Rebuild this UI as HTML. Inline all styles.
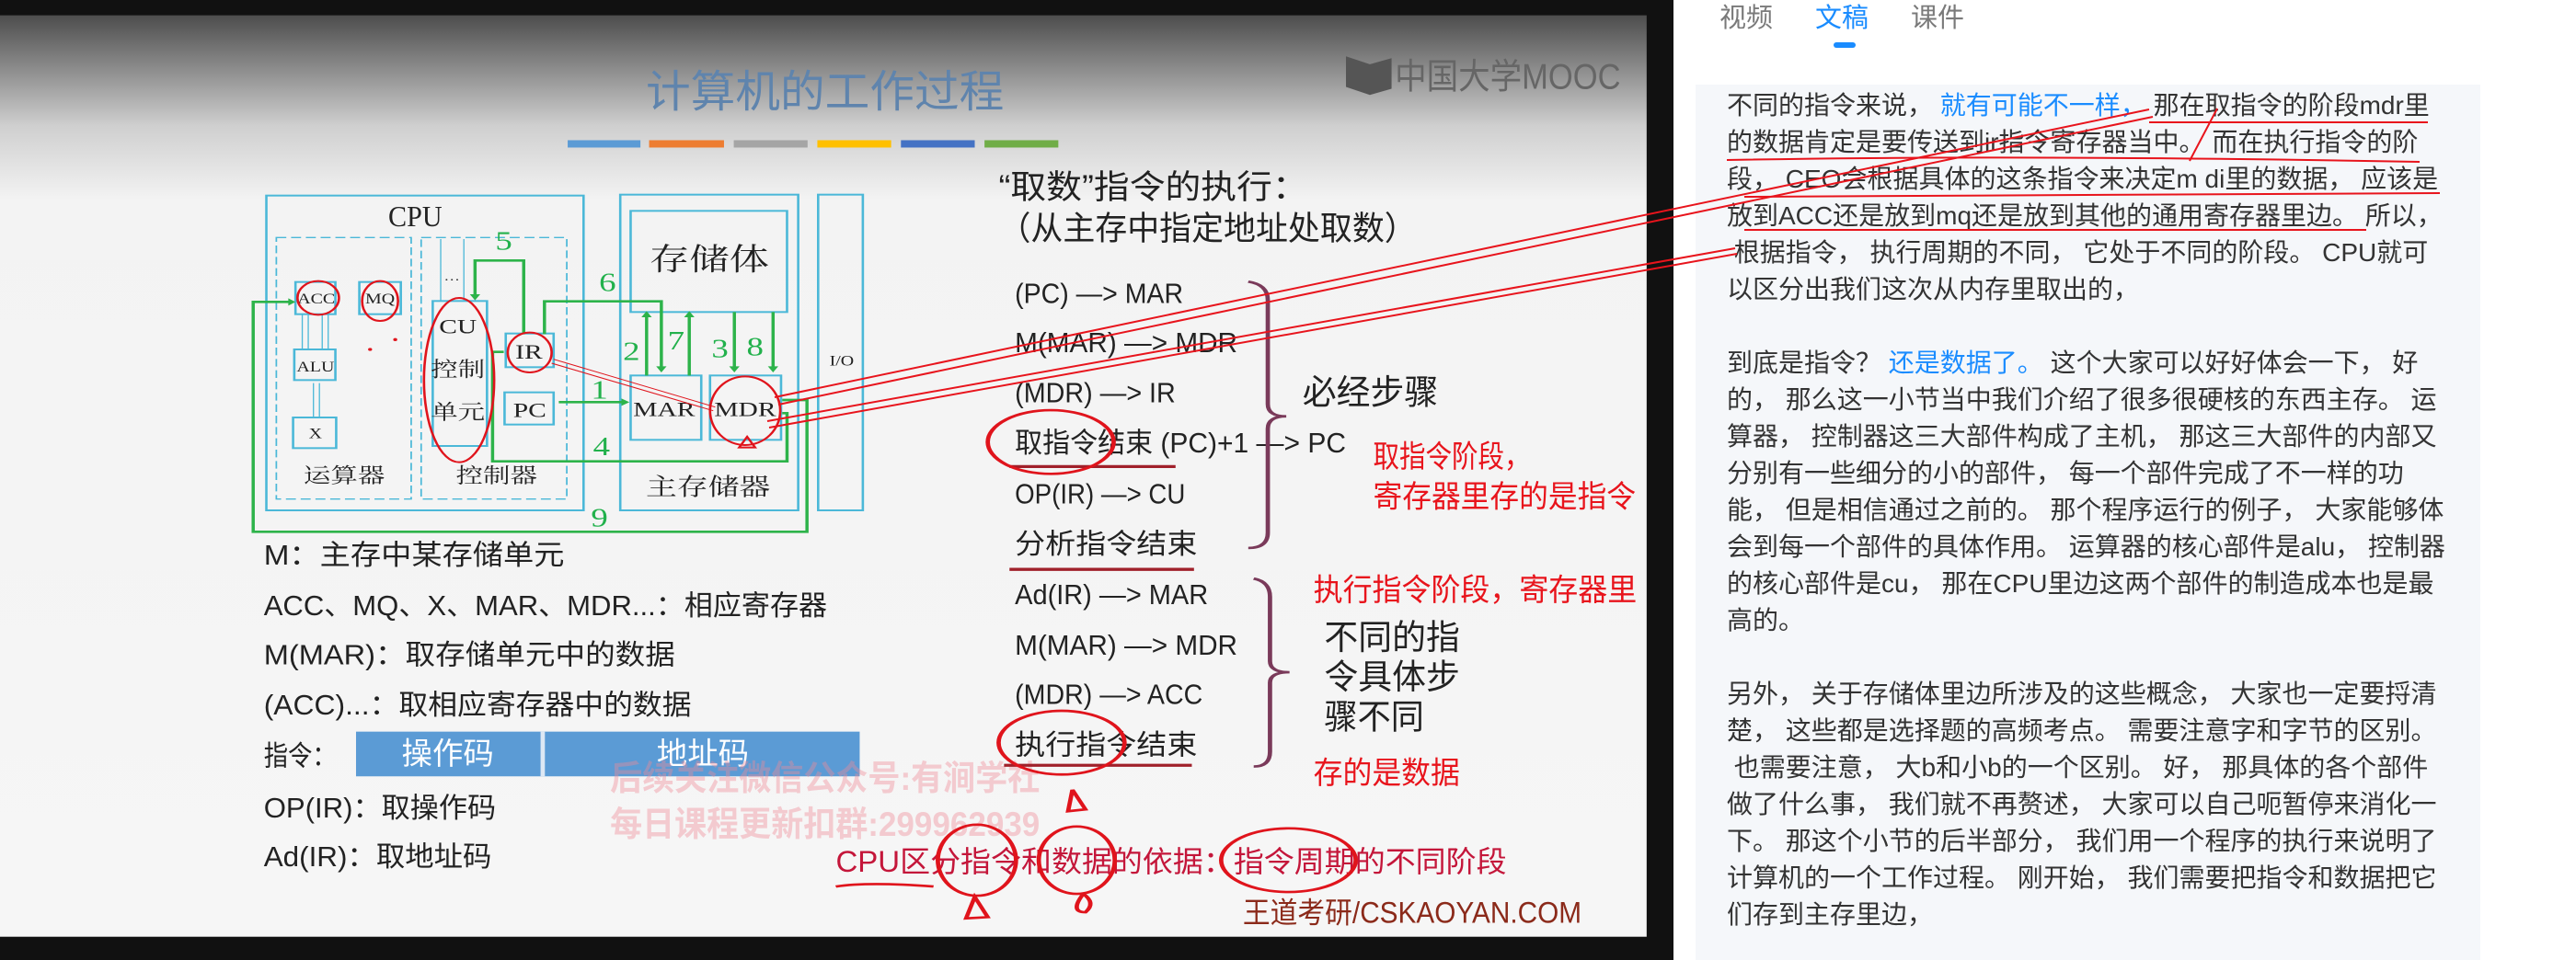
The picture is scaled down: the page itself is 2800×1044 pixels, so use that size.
<!DOCTYPE html>
<html><head><meta charset="utf-8"><style>
html,body{margin:0;padding:0;width:2800px;height:1044px;overflow:hidden;background:#fff;}
#root{position:absolute;left:0;top:0;}
.panel{position:absolute;left:1843px;top:92px;width:853px;height:952px;background:#f5f7fa;}
.tab{position:absolute;top:0;font:29px "Liberation Sans","Noto Sans CJK SC",sans-serif;color:#7a7a7a;line-height:40px;}
.txt{position:absolute;left:1877px;top:95px;font:28px "Liberation Sans","Noto Sans CJK SC",sans-serif;color:#333;line-height:40px;white-space:pre;}
.b{color:#1a8cff;}
</style></head><body>
<svg id="root" width="1850" height="1044" viewBox="0 0 1568 1568" preserveAspectRatio="none" xmlns="http://www.w3.org/2000/svg">
<defs><linearGradient id="g" x1="0" y1="0" x2="0" y2="1"><stop offset="0" stop-color="#4d4d4d"/><stop offset="0.12" stop-color="#cfcfcf"/><stop offset="0.2" stop-color="#f3f3f3"/><stop offset="1" stop-color="#f6f6f6"/></linearGradient></defs>
<rect x="0" y="0" width="1541.7" height="1568" fill="#111"/>
<rect x="0" y="25" width="1517" height="1505" fill="url(#g)"/>
<g font-family="'Liberation Sans','Noto Sans CJK SC',sans-serif">
<text x="595" y="174" font-size="72" fill="#5f84ad" textLength="330" lengthAdjust="spacingAndGlyphs">计算机的工作过程</text>
<path d="M1240 92 L1262 105 L1282 95 L1282 145 L1262 155 L1240 142 Z" fill="#555"/>
<text x="1285" y="145" font-size="58" fill="#666" textLength="208" lengthAdjust="spacingAndGlyphs">中国大学MOOC</text>
<rect x="523" y="229" width="67" height="12" fill="#5b9bd5"/><rect x="598" y="229" width="69" height="12" fill="#ed7d31"/><rect x="676" y="229" width="68" height="12" fill="#a5a5a5"/><rect x="753" y="229" width="68" height="12" fill="#ffc000"/><rect x="830" y="229" width="68" height="12" fill="#4472c4"/><rect x="907" y="229" width="68" height="12" fill="#70ad47"/>
<g fill="#222">
<text x="920" y="324" font-size="54" textLength="285" lengthAdjust="spacingAndGlyphs">“取数”指令的执行：</text>
<text x="920" y="391" font-size="54" textLength="385" lengthAdjust="spacingAndGlyphs">（从主存中指定地址处取数）</text>
<g font-size="46">
<text x="935" y="495" textLength="155" lengthAdjust="spacingAndGlyphs">(PC) —&gt; MAR</text>
<text x="935" y="575" textLength="205" lengthAdjust="spacingAndGlyphs">M(MAR) —&gt; MDR</text>
<text x="935" y="657" textLength="148" lengthAdjust="spacingAndGlyphs">(MDR) —&gt; IR</text>
<text x="935" y="739" textLength="305" lengthAdjust="spacingAndGlyphs">取指令结束 (PC)+1 —&gt; PC</text>
<text x="935" y="822" textLength="157" lengthAdjust="spacingAndGlyphs">OP(IR) —&gt; CU</text>
<text x="935" y="904" textLength="168" lengthAdjust="spacingAndGlyphs">分析指令结束</text>
<text x="935" y="987" textLength="178" lengthAdjust="spacingAndGlyphs">Ad(IR) —&gt; MAR</text>
<text x="935" y="1069" textLength="205" lengthAdjust="spacingAndGlyphs">M(MAR) —&gt; MDR</text>
<text x="935" y="1150" textLength="173" lengthAdjust="spacingAndGlyphs">(MDR) —&gt; ACC</text>
<text x="935" y="1232" textLength="168" lengthAdjust="spacingAndGlyphs">执行指令结束</text>
<text x="243" y="922" textLength="277" lengthAdjust="spacingAndGlyphs">M：主存中某存储单元</text>
<text x="243" y="1005" textLength="519" lengthAdjust="spacingAndGlyphs">ACC、MQ、X、MAR、MDR...：相应寄存器</text>
<text x="243" y="1085" textLength="379" lengthAdjust="spacingAndGlyphs">M(MAR)：取存储单元中的数据</text>
<text x="243" y="1167" textLength="394" lengthAdjust="spacingAndGlyphs">(ACC)...：取相应寄存器中的数据</text>
<text x="243" y="1250" textLength="67" lengthAdjust="spacingAndGlyphs">指令：</text>
<text x="243" y="1335" textLength="214" lengthAdjust="spacingAndGlyphs">OP(IR)：取操作码</text>
<text x="243" y="1415" textLength="210" lengthAdjust="spacingAndGlyphs">Ad(IR)：取地址码</text>
</g>
<g font-size="56">
<text x="1200" y="660" textLength="125" lengthAdjust="spacingAndGlyphs">必经步骤</text>
<text x="1220" y="1060" textLength="125" lengthAdjust="spacingAndGlyphs">不同的指</text>
<text x="1220" y="1125" textLength="125" lengthAdjust="spacingAndGlyphs">令具体步</text>
<text x="1220" y="1190" textLength="92" lengthAdjust="spacingAndGlyphs">骤不同</text>
</g></g>
<g fill="#e8141c" font-size="50">
<text x="1265" y="763" textLength="145" lengthAdjust="spacingAndGlyphs">取指令阶段，</text>
<text x="1265" y="828" textLength="242" lengthAdjust="spacingAndGlyphs">寄存器里存的是指令</text>
<text x="1210" y="981" textLength="298" lengthAdjust="spacingAndGlyphs">执行指令阶段，寄存器里</text>
<text x="1210" y="1280" textLength="135" lengthAdjust="spacingAndGlyphs">存的是数据</text>
</g>
<rect x="328" y="1195" width="464" height="73" fill="#5b9bd5"/><rect x="498" y="1195" width="4" height="73" fill="#dde8f4"/>
<g fill="#fff" font-size="50"><text x="370" y="1248" textLength="85" lengthAdjust="spacingAndGlyphs">操作码</text><text x="605" y="1248" textLength="85" lengthAdjust="spacingAndGlyphs">地址码</text></g>
<g fill="#f08a95" fill-opacity="0.4" font-size="56" font-weight="bold">
<text x="562" y="1290" textLength="396" lengthAdjust="spacingAndGlyphs">后续关注微信公众号:有涧学社</text>
<text x="562" y="1365" textLength="396" lengthAdjust="spacingAndGlyphs">每日课程更新扣群:299962939</text></g>
<text x="770" y="1424" font-size="48" fill="#c4163a" textLength="618" lengthAdjust="spacingAndGlyphs">CPU区分指令和数据的依据：指令周期的不同阶段</text>
<text x="1145" y="1507" font-size="48" fill="#8b2a1a" textLength="312" lengthAdjust="spacingAndGlyphs">王道考研/CSKAOYAN.COM</text>
</g>
<g fill="none" stroke="#7a3a5a" stroke-width="4">
<path d="M1150 460 Q1168 465 1168 490 L1168 660 Q1168 680 1185 680 Q1168 680 1168 700 L1168 870 Q1168 895 1150 895"/>
<path d="M1155 945 Q1170 950 1170 975 L1170 1080 Q1170 1098 1188 1098 Q1170 1098 1170 1115 L1170 1228 Q1170 1252 1155 1252"/>
</g>
<g fill="none" stroke="#a0202a" stroke-width="5"><path d="M930 762 L1083 762"/><path d="M930 930 L1100 930"/><path d="M925 1250 L1098 1250"/></g>
<g fill="none" stroke="#e0141c" stroke-width="4">
<ellipse cx="968" cy="722" rx="58" ry="52"/>
<ellipse cx="978" cy="1213" rx="58" ry="52"/>
<ellipse cx="900" cy="1405" rx="36" ry="58"/>
<ellipse cx="992" cy="1405" rx="35" ry="55"/>
<ellipse cx="1187" cy="1405" rx="62" ry="52"/>
<path d="M770 1448 Q800 1440 860 1448"/>
<path d="M988 1290 L984 1325 L1000 1322 Z"/><path d="M898 1465 L890 1500 L910 1498 Z"/><path d="M998 1460 Q985 1490 1000 1490 Q1010 1475 998 1460"/>
</g>
<svg x="228.85" y="300.38" width="576.35" height="585.75" viewBox="0 0 1568 1170" preserveAspectRatio="none">
<g fill="none" stroke="#4bb8d8" stroke-width="6">
<rect x="45" y="38" width="795" height="1027"/>
<rect x="70" y="175" width="338" height="853" stroke-dasharray="25 12" stroke-width="4"/>
<rect x="433" y="175" width="365" height="853" stroke-dasharray="25 12" stroke-width="4"/>
<rect x="932" y="35" width="446" height="1030"/>
<rect x="958" y="88" width="392" height="330"/>
<rect x="958" y="625" width="177" height="210"/><rect x="1157" y="625" width="178" height="210"/>
<rect x="1428" y="35" width="112" height="1030"/>
<rect x="118" y="320" width="100" height="105"/><rect x="278" y="320" width="104" height="105"/>
<rect x="115" y="540" width="103" height="100"/><rect x="112" y="762" width="108" height="100"/>
<rect x="462" y="382" width="136" height="473"/><rect x="645" y="488" width="120" height="110"/><rect x="642" y="680" width="123" height="105"/>
<path d="M135 425 L135 540 M150 425 L150 540 M185 425 L185 540 M200 425 L200 540 M163 650 L163 762 M178 650 L178 762 M482 180 L482 382 M540 180 L540 382" stroke-width="3"/>
</g>
<g font-family="'Liberation Serif','Noto Serif CJK SC',serif" fill="#222" text-anchor="middle">
<text x="418" y="138" font-size="95" textLength="135" lengthAdjust="spacingAndGlyphs">CPU</text>
<g font-size="46"><text x="170" y="390">ACC</text><text x="330" y="390">MQ</text><text x="168" y="612">ALU</text><text x="168" y="830">X</text><text x="1487" y="592">I/O</text></g>
<g font-size="68"><text x="525" y="488">CU</text><text x="525" y="628">控制</text><text x="525" y="768">单元</text><text x="703" y="570">IR</text><text x="705" y="760">PC</text><text x="1042" y="757">MAR</text><text x="1245" y="757">MDR</text><text x="240" y="975">运算器</text><text x="622" y="975">控制器</text></g>
<text x="1155" y="280" font-size="100">存储体</text><text x="1152" y="1015" font-size="78">主存储器</text>
<text x="510" y="315" font-size="40">…</text>
</g>
<g font-family="'Liberation Serif',serif" font-size="85" fill="#22b14c" text-anchor="middle">
<text x="640" y="215">5</text><text x="900" y="350">6</text><text x="960" y="575">2</text><text x="1072" y="540">7</text><text x="1182" y="565">3</text><text x="1270" y="560">8</text><text x="880" y="700">1</text><text x="885" y="885">4</text><text x="880" y="1118">9</text>
</g>
<g fill="none" stroke="#2db34a" stroke-width="8">
<path d="M568 372 L568 250 L690 250 L690 490"/><path d="M742 490 L742 383 L1035 383 L1035 605"/>
<path d="M998 625 L998 430"/><path d="M1105 625 L1105 430"/><path d="M1218 418 L1218 605"/><path d="M1315 418 L1315 605"/>
<path d="M778 712 L940 712"/><path d="M1338 748 L1350 748 L1350 905 L612 905 L612 548 L640 548"/>
<path d="M1338 705 L1400 705 L1400 1135 L12 1135 L12 385 L110 385"/>
</g>
<g fill="#2db34a"><path d="M555 360 L581 360 L568 380 Z"/><path d="M1022 595 L1048 595 L1035 615 Z"/><path d="M985 435 L1011 435 L998 415 Z"/><path d="M1092 435 L1118 435 L1105 415 Z"/><path d="M1205 595 L1231 595 L1218 615 Z"/><path d="M1302 595 L1328 595 L1315 615 Z"/><path d="M935 700 L935 724 L955 712 Z"/><path d="M100 373 L100 397 L118 385 Z"/></g>
<g fill="none" stroke="#e0141c" stroke-width="6">
<ellipse cx="175" cy="372" rx="52" ry="55"/><ellipse cx="330" cy="382" rx="45" ry="65"/><ellipse cx="528" cy="640" rx="88" ry="268"/><ellipse cx="705" cy="550" rx="55" ry="65"/><ellipse cx="1245" cy="740" rx="88" ry="112"/>
<path d="M1170 728 L765 572 M1165 740 L760 585" stroke-width="3"/><path d="M1230 860 L1250 825 L1270 860 Z"/>
</g>
<g fill="#e0141c"><circle cx="305" cy="540" r="5"/><circle cx="368" cy="508" r="5"/></g>
</svg>
</svg>
<div style="position:absolute;left:1790px;top:0;width:29px;height:1044px;background:#111"></div>
<div class="panel"></div>
<div class="tab" style="left:1869px">视频</div>
<div class="tab" style="left:1973px;color:#1a8cff">文稿</div>
<div style="position:absolute;left:1993px;top:46px;width:24px;height:6px;border-radius:3px;background:#1a8cff"></div>
<div class="tab" style="left:2077px">课件</div>
<div class="txt">不同的指令来说， <span class="b">就有可能不一样，</span> 那在取指令的阶段mdr里
的数据肯定是要传送到ir指令寄存器当中。 而在执行指令的阶
段， CEO会根据具体的这条指令来决定m di里的数据， 应该是
放到ACC还是放到mq还是放到其他的通用寄存器里边。 所以，
 根据指令， 执行周期的不同， 它处于不同的阶段。 CPU就可
以区分出我们这次从内存里取出的，

到底是指令？ <span class="b">还是数据了。</span> 这个大家可以好好体会一下， 好
的， 那么这一小节当中我们介绍了很多很硬核的东西主存。 运
算器， 控制器这三大部件构成了主机， 那这三大部件的内部又
分别有一些细分的小的部件， 每一个部件完成了不一样的功
能， 但是相信通过之前的。 那个程序运行的例子， 大家能够体
会到每一个部件的具体作用。 运算器的核心部件是alu， 控制器
的核心部件是cu， 那在CPU里边这两个部件的制造成本也是最
高的。

另外， 关于存储体里边所涉及的这些概念， 大家也一定要捋清
楚， 这些都是选择题的高频考点。 需要注意字和字节的区别。
 也需要注意， 大b和小b的一个区别。 好， 那具体的各个部件
做了什么事， 我们就不再赘述， 大家可以自己呃暂停来消化一
下。 那这个小节的后半部分， 我们用一个程序的执行来说明了
计算机的一个工作过程。 刚开始， 我们需要把指令和数据把它
们存到主存里边，</div>
<svg style="position:absolute;left:0;top:0" width="2800" height="1044" xmlns="http://www.w3.org/2000/svg">
<g fill="none" stroke="#e8141c" stroke-width="2">
<path d="M842 432 L2336 119 M846 440 L2340 127"/>
<path d="M834 458 L1886 270 M836 465 L1888 276"/>
<path d="M2336 133 L2639 133"/>
<path d="M1877 174 Q2200 168 2630 176"/>
<path d="M1896 214 L2652 210"/>
<path d="M1896 250 L2572 250"/>
<path d="M2410 118 L2380 175"/>
</g></svg>
</body></html>
